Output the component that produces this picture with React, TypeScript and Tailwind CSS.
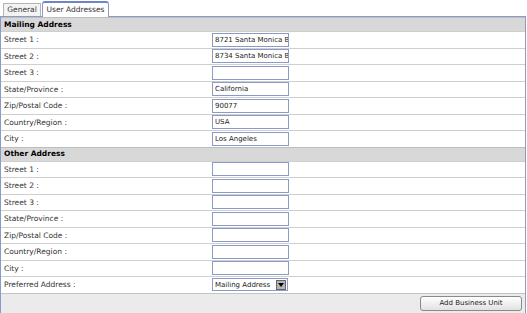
import React from "react";

const mailing = [
  { label: "Street 1 :", value: "8721 Santa Monica Blvd" },
  { label: "Street 2 :", value: "8734 Santa Monica Blvd" },
  { label: "Street 3 :", value: "" },
  { label: "State/Province :", value: "California" },
  { label: "Zip/Postal Code :", value: "90077" },
  { label: "Country/Region :", value: "USA" },
  { label: "City :", value: "Los Angeles" },
];

const other = [
  "Street 1 :",
  "Street 2 :",
  "Street 3 :",
  "State/Province :",
  "Zip/Postal Code :",
  "Country/Region :",
  "City :",
];

function Row({ label, children }: { label: string; children: React.ReactNode }) {
  return (
    <div className="flex h-[16.5px] items-center border-t border-[#cfcfcf] bg-white">
      <div className="w-[211px] pl-[3px] text-[#333]">{label}</div>
      {children}
    </div>
  );
}

function Field({ value }: { value: string }) {
  return (
    <div className="h-[14px] w-[77px] overflow-hidden whitespace-nowrap border border-[#8c9ac6] bg-white pl-[2px] text-[7px] leading-[12px] text-[#222]">
      {value}
    </div>
  );
}

function SectionHeader({ title }: { title: string }) {
  return (
    <div className="flex h-[14px] items-center border-t border-[#bdbdbd] bg-[#d8d8d8] pl-[3px] font-bold text-black">
      {title}
    </div>
  );
}

export default function App() {
  return (
    <div
      className="h-[313px] w-[527px] bg-white text-[7.5px]"
      style={{ fontFamily: '"DejaVu Sans", Verdana, sans-serif' }}
    >
      {/* tabs */}
      <div className="flex h-[16px] items-end pl-[3px]">
        <div className="flex h-[13px] w-[38px] items-center justify-center border border-b-0 border-[#b4b4b4] bg-[#f3f3f3] text-[#333]">
          General
        </div>
        <div className="relative z-10 -mb-px ml-px flex h-[16px] w-[67px] items-center justify-center rounded-t-[3px] border border-b-0 border-[#8c9ac6] border-t-2 border-t-[#6f85c6] bg-white text-[#333]">
          User Addresses
        </div>
      </div>
      <div className="w-[526px] border border-[#8c9ac6]">
        <SectionHeader title="Mailing Address" />
        {mailing.map((r) => (
          <Row key={r.label} label={r.label}>
            <Field value={r.value} />
          </Row>
        ))}
        <SectionHeader title="Other Address" />
        {other.map((l) => (
          <Row key={l} label={l}>
            <Field value="" />
          </Row>
        ))}
        <Row label="Preferred Address :">
          <div className="flex h-[13px] w-[76px] items-center border border-[#8c9ac6] bg-white">
            <span className="flex-1 whitespace-nowrap pl-[2px] text-[7px] text-[#222]">Mailing Address</span>
            <span className="mr-px flex h-[10px] w-[10px] items-center justify-center border border-[#666] bg-[#b5b5b5]">
              <svg width="6" height="4" viewBox="0 0 6 4">
                <path d="M0 0 L6 0 L3 4 Z" fill="#000" />
              </svg>
            </span>
          </div>
        </Row>
        <div className="flex h-[20px] items-center justify-end border-t border-[#c4c4c4] bg-[#ebebeb] pr-[3px]">
          <button className="h-[15px] w-[102px] rounded-[3px] border border-[#8a8a8a] bg-gradient-to-b from-white to-[#e2e2e2] text-[7px] text-[#222]">
            Add Business Unit
          </button>
        </div>
      </div>
    </div>
  );
}
